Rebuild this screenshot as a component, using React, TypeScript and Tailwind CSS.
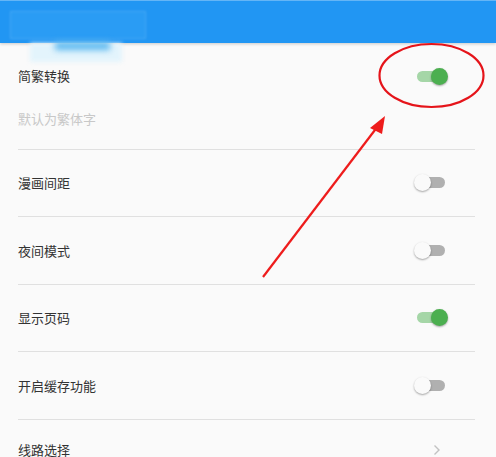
import React from 'react';

const font = { fontFamily: '"Noto Sans CJK SC", "Noto Sans", sans-serif' };

const Toggle: React.FC<{ on?: boolean }> = ({ on }) => {
    return (
        <div className="relative w-[34px] h-[17px] shrink-0">
            <div
                className={`absolute left-[3px] right-[3px] top-[3px] h-[11px] rounded-full ${
                    on ? 'bg-[#a5d6a7]' : 'bg-[#b0b0b0]'
                }`}
            />
            <div
                className={`absolute top-0 w-[17px] h-[17px] rounded-full shadow-[0_1px_2px_rgba(0,0,0,0.35)] ${
                    on ? 'right-0 bg-[#4caf50]' : 'left-0 bg-[#fafafa]'
                }`}
            />
        </div>
    );
};

const Row: React.FC<{ label: string; children: React.ReactNode; last?: boolean }> = ({
    label,
    children,
    last,
}) => {
    return (
        <div
            className={`flex items-center justify-between pr-[27px] ${
                last ? 'h-[60px]' : 'h-[67.5px] border-b border-[#e0e0e0]'
            }`}
        >
            <span className="text-[13px] text-[#333]">{label}</span>
            {children}
        </div>
    );
};

export default function App() {
    return (
        <div className="relative w-[496px] h-[457px] overflow-hidden bg-[#fafafa]" style={font}>
            <header className="h-[43px] bg-[#2196f3] border-t border-[#64b5f6] shadow-[0_1px_3px_rgba(0,0,0,0.2)]" />

            <div className="ml-[18px] w-[457px]">
                <div className="flex flex-col h-[106.5px] border-b border-[#e0e0e0] pr-[27px]">
                    <div className="flex items-center justify-between mt-[23px] h-[20px]">
                        <span className="text-[13px] text-[#333]">简繁转换</span>
                        <Toggle on />
                    </div>
                    <span className="mt-[23px] text-[13px] text-[#c8c8c8]">默认为繁体字</span>
                </div>
                <Row label="漫画间距">
                    <Toggle />
                </Row>
                <Row label="夜间模式">
                    <Toggle />
                </Row>
                <Row label="显示页码">
                    <Toggle on />
                </Row>
                <Row label="开启缓存功能">
                    <Toggle />
                </Row>
                <Row label="线路选择" last>
                    <svg width="8" height="12" viewBox="0 0 8 12" className="mr-[7px]">
                        <path d="M1.5 1.5 L6 6 L1.5 10.5" fill="none" stroke="#c2c2c2" strokeWidth="1.4" />
                    </svg>
                </Row>
            </div>

            {/* redacted title blur */}
            <div className="absolute left-[10px] top-[11px] w-[136px] h-[28px] border border-[#5fb4f5]/50 bg-[#2a9cf4] blur-[1px]" />
            <div className="absolute left-[30px] top-[43px] w-[92px] h-[19px] bg-[#e3f4fc] blur-[2px]" />
            <div className="absolute left-[55px] top-[42px] w-[55px] h-[8px] bg-[#5ab8f0] blur-[3px]" />

            {/* annotation */}
            <svg className="absolute inset-0 pointer-events-none" width="496" height="457">
                <ellipse cx="431.5" cy="75.5" rx="52" ry="31.5" fill="none" stroke="#e5141a" strokeWidth="2.2" />
                <line x1="263" y1="277" x2="378" y2="126" stroke="#ee1c1c" strokeWidth="2.2" />
                <polygon points="385,116 370,128 382,134" fill="#ee1c1c" />
            </svg>
        </div>
    );
}
